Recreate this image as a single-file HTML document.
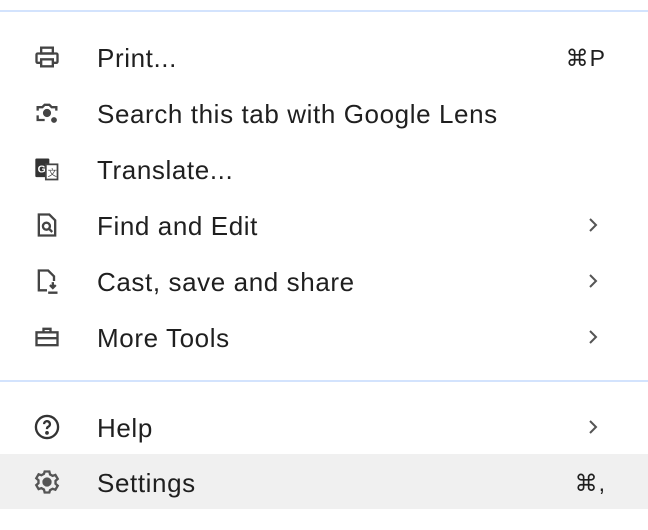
<!DOCTYPE html><html><head><style>
body{margin:0;width:648px;height:530px;background:#fff;position:relative;overflow:hidden;font-family:"Liberation Sans",sans-serif;color:#1f1f1f}
.sep{position:absolute;left:0;width:648px;height:2px;background:#d3e3fd}
.row{position:absolute;left:0;width:648px;height:56px}
.row .t{position:absolute;left:97px;top:1px;line-height:56px;font-size:26px;letter-spacing:0.6px}
.row svg.i{position:absolute;left:33px;top:14px;width:28px;height:28px}
.row .k{position:absolute;right:42px;top:1px;line-height:56px;font-size:23px;letter-spacing:1px}
.row .c{position:absolute;left:587px;top:20px}
</style></head><body>
<div class="sep" style="top:10px"></div>
<div class="sep" style="top:380px"></div>
<div class="row" style="top:29px"><svg class="i" viewBox="0 0 24 24" fill="none" stroke="#444" stroke-width="2"><rect x="7" y="4" width="10" height="5"/><rect x="3" y="9" width="18" height="8" rx="1"/><rect x="7" y="14" width="10" height="6" fill="#fff"/></svg><span class="t">Print...</span><span class="k">⌘P</span></div>
<div class="row" style="top:85px"><svg class="i" viewBox="0 0 24 24" fill="none" stroke="#444" stroke-width="2"><path d="M4 10V7h4l2-2h4l2 2h4v3M4 14v4h6"/><circle cx="12" cy="12" r="2.5" fill="#444"/><circle cx="18" cy="18" r="1.5" fill="#444"/></svg><span class="t">Search this tab with Google Lens</span></div>
<div class="row" style="top:141px"><svg class="i" viewBox="0 0 24 24"><rect x="2" y="3" width="12" height="16" rx="1" fill="#333"/><text x="4" y="15" font-size="9" fill="#fff" font-family="Liberation Sans" font-weight="bold">G</text><rect x="11" y="8" width="10" height="13" fill="#fff" stroke="#444" stroke-width="1.5"/><text x="12.5" y="18" font-size="8" fill="#444">文</text></svg><span class="t">Translate...</span></div>
<div class="row" style="top:197px"><svg class="i" viewBox="0 0 24 24" fill="none" stroke="#444" stroke-width="2"><path d="M5 3h9l5 5v13H5z"/><circle cx="11.5" cy="13" r="3"/><path d="M14 15.5l2.5 2.5"/></svg><span class="t">Find and Edit</span><svg class="c" width="12" height="16"><path d="M3 2l6 6-6 6" fill="none" stroke="#555" stroke-width="2"/></svg></div>
<div class="row" style="top:253px"><svg class="i" viewBox="0 0 24 24" fill="none" stroke="#444" stroke-width="2"><path d="M12 20H5V3h8l5 5v4"/><path d="M17 13v5M14.5 15.5l2.5 2.5 2.5-2.5M13 22h8"/></svg><span class="t">Cast, save and share</span><svg class="c" width="12" height="16"><path d="M3 2l6 6-6 6" fill="none" stroke="#555" stroke-width="2"/></svg></div>
<div class="row" style="top:309px"><svg class="i" viewBox="0 0 24 24" fill="none" stroke="#444" stroke-width="2"><rect x="3" y="8" width="18" height="11"/><path d="M9 8V5h6v3M3 13h18"/></svg><span class="t">More Tools</span><svg class="c" width="12" height="16"><path d="M3 2l6 6-6 6" fill="none" stroke="#555" stroke-width="2"/></svg></div>
<div class="row" style="top:399px"><svg class="i" viewBox="0 0 24 24" fill="none" stroke="#333" stroke-width="2"><circle cx="12" cy="12" r="9.5"/><path d="M9.5 9.5a2.5 2.5 0 1 1 3.5 2.3c-.8.4-1 1-1 2"/><circle cx="12" cy="17" r=".6" fill="#333"/></svg><span class="t">Help</span><svg class="c" width="12" height="16"><path d="M3 2l6 6-6 6" fill="none" stroke="#555" stroke-width="2"/></svg></div>
<div class="row" style="top:454px;background:#f0f0f0;height:55px"><svg class="i" viewBox="0 0 24 24" fill="none" stroke="#555" stroke-width="2"><path d="M10 3h4l.6 2.5 2.2 1.2 2.4-.8 2 3.4-1.9 1.7v2.5l1.9 1.7-2 3.4-2.4-.8-2.2 1.2L14 21h-4l-.6-2.5-2.2-1.2-2.4.8-2-3.4 1.9-1.7V10.5L2.8 8.8l2-3.4 2.4.8 2.2-1.2z"/><circle cx="12" cy="12" r="3" fill="#555"/></svg><span class="t">Settings</span><span class="k">⌘,</span></div>
</body></html>
